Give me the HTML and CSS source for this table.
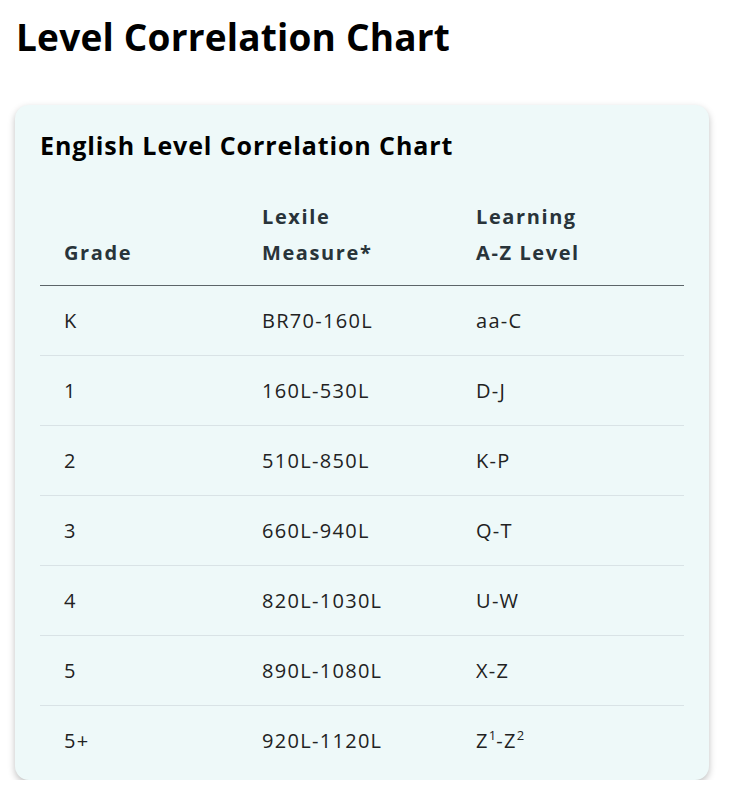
FILE: index.html
```html
<!DOCTYPE html>
<html lang="en">
<head>
<meta charset="utf-8">
<title>Level Correlation Chart</title>
<link rel="stylesheet" href="styles.css">
</head>
<body>
<main class="page">
  <h1 class="page-title">Level Correlation Chart</h1>
  <section class="card">
    <h2 class="card-title">English Level Correlation Chart</h2>
    <table class="chart">
      <colgroup>
        <col class="col-grade">
        <col class="col-lexile">
        <col class="col-az">
      </colgroup>
      <thead>
        <tr>
          <th>Grade</th>
          <th>Lexile<br>Measure*</th>
          <th>Learning<br>A-Z Level</th>
        </tr>
      </thead>
      <tbody>
        <tr><td>K</td><td>BR70-160L</td><td>aa-C</td></tr>
        <tr><td>1</td><td>160L-530L</td><td>D-J</td></tr>
        <tr><td>2</td><td>510L-850L</td><td>K-P</td></tr>
        <tr><td>3</td><td>660L-940L</td><td>Q-T</td></tr>
        <tr><td>4</td><td>820L-1030L</td><td>U-W</td></tr>
        <tr><td>5</td><td>890L-1080L</td><td>X-Z</td></tr>
        <tr><td>5+</td><td>920L-1120L</td><td>Z<sup>1</sup>-Z<sup>2</sup></td></tr>
      </tbody>
    </table>
  </section>
</main>
</body>
</html>
```

FILE: styles.css
```css
* { box-sizing: border-box; }

body {
  margin: 0;
  background: #ffffff;
  font-family: "Open Sans", "Liberation Sans", sans-serif;
  color: #1f1f1f;
}

.page {
  padding: 0 21px 0 15px;
}

.page-title {
  margin: 14px 0 0 1px;
  font-size: 37px;
  line-height: 46px;
  font-weight: 700;
  color: #000;
  letter-spacing: 0.2px;
}

.card {
  margin-top: 45px;
  background: #eef9f9;
  border-radius: 14px;
  box-shadow: 0 3px 7px rgba(0, 0, 0, 0.25);
  padding: 25px 25px 5px 25px;
}

.card-title {
  margin: 0;
  font-size: 25px;
  line-height: 30px;
  font-weight: 700;
  color: #000;
  letter-spacing: 0.9px;
}

.chart {
  margin-top: 25px;
  width: 100%;
  border-collapse: collapse;
  table-layout: fixed;
}

.col-grade { width: 198px; }
.col-lexile { width: 214px; }
.col-az { width: auto; }

.chart th {
  text-align: left;
  vertical-align: bottom;
  padding: 14px 24px;
  font-size: 20px;
  line-height: 36px;
  font-weight: 700;
  color: #29343a;
  letter-spacing: 1.6px;
  border-bottom: 1px solid #5c6569;
}

.chart td {
  padding: 17px 24px;
  font-size: 20px;
  line-height: 35px;
  font-weight: 400;
  color: #222;
  letter-spacing: 1.3px;
  border-bottom: 1px solid #d9e3e6;
}

.chart tbody tr:last-child td {
  border-bottom: none;
}

.chart sup {
  font-size: 13px;
  line-height: 0;
  vertical-align: 8px;
  letter-spacing: 0;
}
```
